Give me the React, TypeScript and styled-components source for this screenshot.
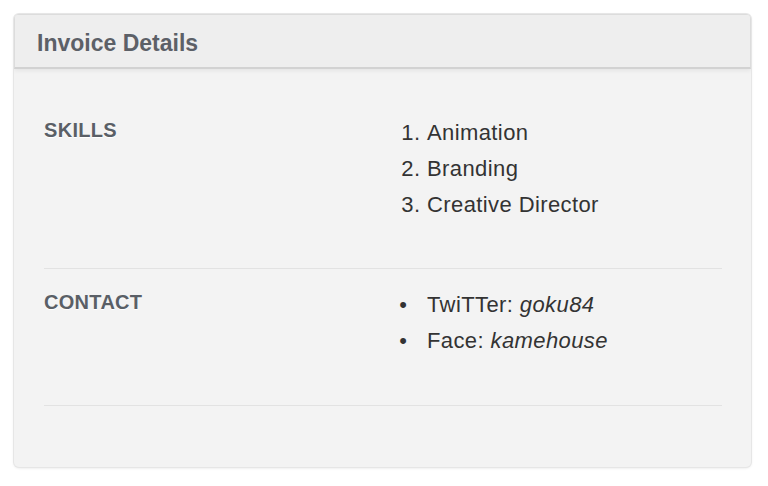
import React from "react";
import styled, { createGlobalStyle } from "styled-components";

const Global = createGlobalStyle`
  html, body { margin: 0; padding: 0; background: #ffffff; }
  body { font-family: "Liberation Sans", Arial, sans-serif; }
`;

const Page = styled.div`
  padding: 14px 17px 19px 14px;
`;

const Card = styled.section`
  background: #f3f3f3;
  border-radius: 5px;
  box-shadow: 0 0 0 1px #e6e6e6, 0 1px 3px rgba(0, 0, 0, 0.12);
  overflow: hidden;
`;

const Header = styled.header`
  box-sizing: border-box;
  height: 55px;
  display: flex;
  align-items: center;
  padding: 5px 22px 0;
  background: #eeeeee;
  border: 1px solid #dcdcdc;
  border-bottom: 2px solid #d2d2d2;
  box-shadow: 0 2px 4px rgba(0, 0, 0, 0.06);
  border-radius: 3px 3px 0 0;
`;

const Title = styled.h2`
  margin: 0;
  font-size: 23px;
  font-weight: bold;
  color: #5c6067;
`;

const Body = styled.div`
  padding: 28px 29px 61px 30px;
`;

const Row = styled.div<{ $last?: boolean }>`
  display: grid;
  grid-template-columns: 339px 1fr;
  padding: 18px 0 ${(p) => (p.$last ? 46 : 45)}px;
  border-bottom: 1px solid #e2e2e2;
`;

const Label = styled.div`
  font-size: 20px;
  font-weight: bold;
  line-height: 30px;
  letter-spacing: 0.3px;
  color: #5a5f66;
  text-shadow: 0 1px 0 #ffffff;
  text-transform: uppercase;
`;

const OList = styled.ol`
  margin: 0;
  padding-left: 44px;
  font-size: 22px;
  line-height: 36px;
  letter-spacing: 0.4px;
  color: #333333;
`;

const UList = styled.ul`
  margin: 0;
  padding-left: 44px;
  font-size: 22px;
  line-height: 36px;
  letter-spacing: 0.4px;
  color: #333333;
  list-style: none;

  & > li::marker {
    content: "\\2022\\00a0\\00a0\\00a0";
  }
`;

const Item = styled.li`
  display: list-item;
`;

export default function App() {
  return (
    <>
      <Global />
      <Page>
        <Card>
          <Header>
            <Title>Invoice Details</Title>
          </Header>
          <Body>
            <Row>
              <Label>Skills</Label>
              <OList>
                <Item>Animation</Item>
                <Item>Branding</Item>
                <Item>Creative Director</Item>
              </OList>
            </Row>
            <Row $last>
              <Label>Contact</Label>
              <UList>
                <Item>
                  TwiTTer: <em>goku84</em>
                </Item>
                <Item>
                  Face: <em>kamehouse</em>
                </Item>
              </UList>
            </Row>
          </Body>
        </Card>
      </Page>
    </>
  );
}
